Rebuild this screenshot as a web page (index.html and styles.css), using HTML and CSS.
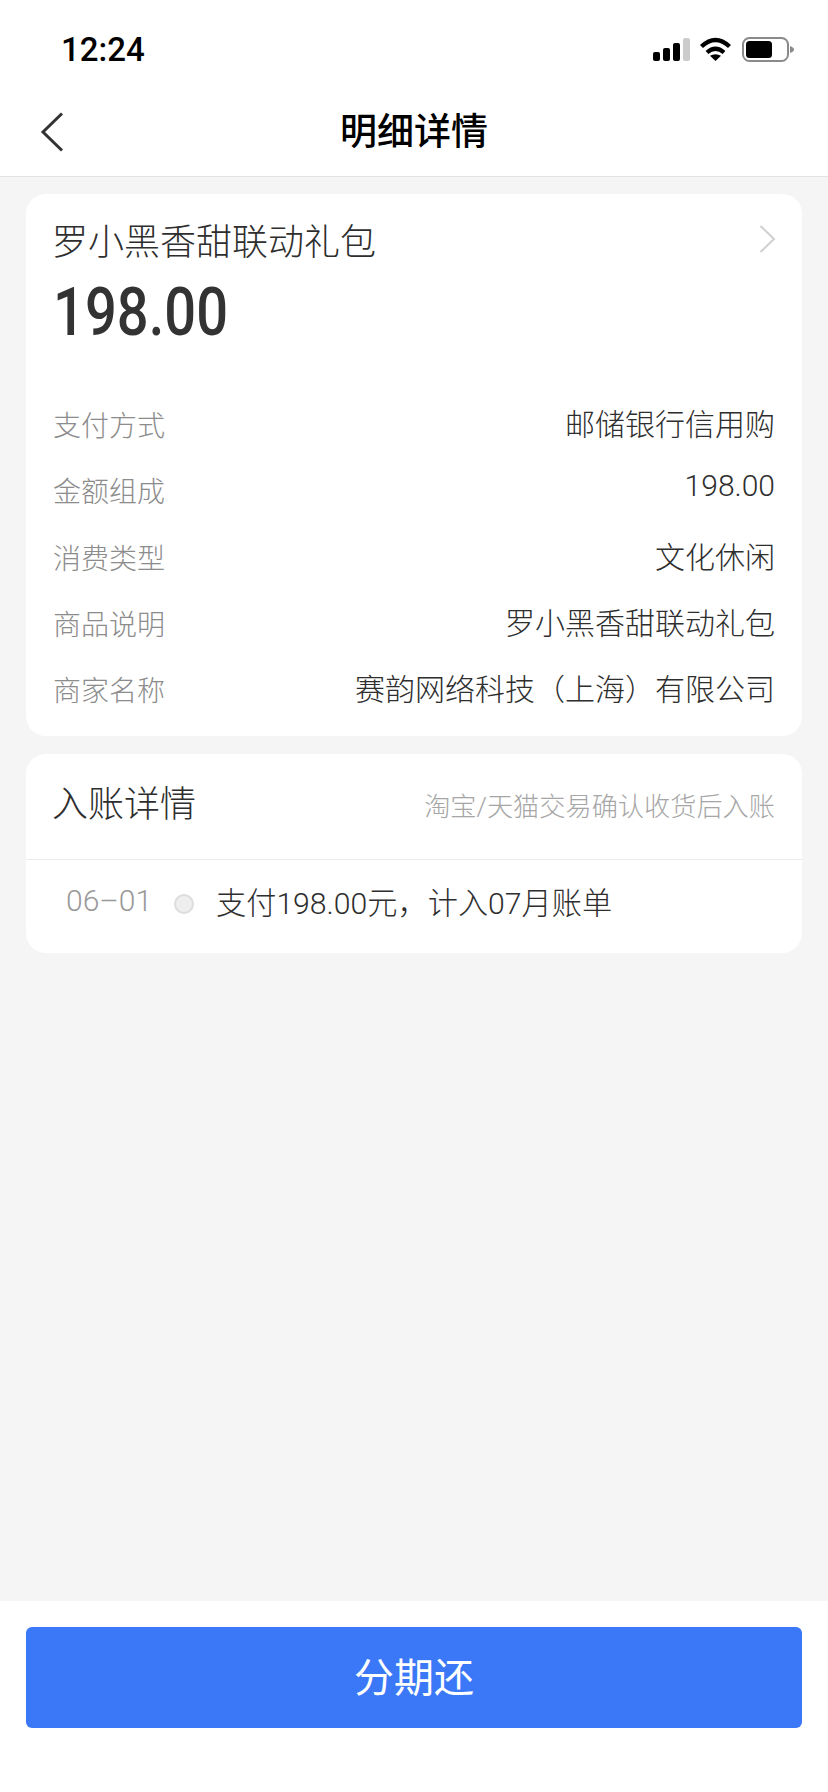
FILE: index.html
```html
<!DOCTYPE html>
<html lang="zh-CN">
<head>
<meta charset="utf-8">
<title>明细详情</title>
<link rel="stylesheet" href="styles.css">
</head>
<body>
<div class="app">
  <header class="status">
    <span class="time">12:24</span>
    <svg class="status-icons" width="141" height="25" viewBox="0 0 141 25">
      <rect x="0" y="15" width="7" height="9" rx="2" fill="#000"/>
      <rect x="10" y="11" width="7" height="13" rx="2" fill="#000"/>
      <rect x="20" y="6" width="7" height="18" rx="2" fill="#000"/>
      <rect x="30" y="1" width="7" height="23" rx="2" fill="#ccc"/>
      <path d="M48.5 9.5Q62.5 -3.5 76.5 9.5" fill="none" stroke="#000" stroke-width="4.4"/>
      <path d="M54 15.5Q62.5 8 71 15.5" fill="none" stroke="#000" stroke-width="4.2"/>
      <path d="M62.5 24L57 18.8Q62.5 15.5 68 18.8Z" fill="#000"/>
      <rect x="90" y="1" width="45" height="23" rx="6.5" fill="none" stroke="#8a8a8a" stroke-width="2"/>
      <rect x="93" y="4" width="26" height="17" rx="3.5" fill="#000"/>
      <path d="M137 9Q141 10.500 141 12.500Q141 14.500 137 16Z" fill="#8a8a8a"/>
    </svg>
  </header>
  <nav class="nav">
    <svg class="back" width="24" height="40" viewBox="0 0 24 40">
      <path d="M22 1.500L3 20L22 38.500" fill="none" stroke="#333" stroke-width="3"/>
    </svg>
    <h1 class="nav-title">明细详情</h1>
  </nav>
  <main class="main">
    <section class="card">
      <div class="head-row">
        <span class="goods">罗小黑香甜联动礼包</span>
        <svg class="more" width="17" height="28" viewBox="0 0 17 28">
          <path d="M1.500 1L15 14L1.500 27" fill="none" stroke="#d0d0d0" stroke-width="2"/>
        </svg>
      </div>
      <div class="amount">198.00</div>
      <dl class="rows">
        <div class="row"><dt>支付方式</dt><dd>邮储银行信用购</dd></div>
        <div class="row"><dt>金额组成</dt><dd class="num">198.00</dd></div>
        <div class="row"><dt>消费类型</dt><dd>文化休闲</dd></div>
        <div class="row"><dt>商品说明</dt><dd>罗小黑香甜联动礼包</dd></div>
        <div class="row"><dt>商家名称</dt><dd>赛韵网络科技（上海）有限公司</dd></div>
      </dl>
    </section>
    <section class="card">
      <div class="entry-head">
        <h2 class="entry-title">入账详情</h2>
        <span class="entry-hint">淘宝/天猫交易确认收货后入账</span>
      </div>
      <div class="entry-row">
        <span class="entry-date">06–01</span>
        <span class="entry-dot"></span>
        <span class="entry-text">支付198.00元，计入07月账单</span>
      </div>
    </section>
  </main>
  <footer class="footer">
    <button class="cta" type="button">分期还</button>
  </footer>
</div>
</body>
</html>
```
FILE: styles.css
```css
* { box-sizing: border-box; }
html, body { margin: 0; padding: 0; }
body {
  font-family: Roboto, "Noto Sans CJK SC", sans-serif;
  color: #333;
  background: #fff;
}
.app { display: flex; flex-direction: column; height: 1792px; }

.status {
  height: 88px;
  padding: 37px 34px 0 61px;
  display: flex;
  justify-content: space-between;
  align-items: flex-start;
  background: #fff;
}
.time {
  font-size: 33px;
  line-height: 26px;
  font-weight: 500;
  color: #000;
}
.status-icons { display: block; }

.nav {
  position: relative;
  height: 89px;
  border-bottom: 1px solid #e2e2e2;
  display: flex;
  align-items: center;
  justify-content: center;
  background: #fff;
}
.back { position: absolute; left: 40px; top: 24px; }
.nav-title {
  margin: 2px 0 0;
  font-size: 37px;
  line-height: 50px;
  font-weight: 500;
  color: #000;
}

.main {
  flex: 1;
  background: #f5f5f5;
  padding: 17px 26px 0;
  display: flex;
  flex-direction: column;
  gap: 18px;
}
.card { background: #fff; border-radius: 20px; }

.head-row {
  display: flex;
  justify-content: space-between;
  align-items: center;
  padding: 24px 26px 0 26px;
}
.goods { font-size: 36px; line-height: 50px; font-weight: 300; color: #2e2e2e; }
.more { margin-top: -8px; }
.amount {
  padding-left: 27px;
  height: 88px;
  font-size: 66px;
  line-height: 90px;
  font-weight: 500;
  color: #333;
  transform: scaleX(0.85);
  transform-origin: 27px 0;
}
.rows { margin: 0; padding: 35px 27px 13.75px 27px; }
.row {
  height: 66.25px;
  display: flex;
  justify-content: space-between;
  align-items: center;
  font-weight: 300;
}
.row dt { font-size: 28px; color: #8c8c8c; }
.row dd { margin: 0 0 4px; font-size: 30px; color: #2e2e2e; }
.row .num { margin: -10px 0 0; }

.entry-head {
  height: 106px;
  padding: 0 27px 4px 26px;
  display: flex;
  justify-content: space-between;
  align-items: center;
  border-bottom: 1px solid #ececec;
}
.entry-title { margin: 0; font-size: 36px; line-height: 50px; font-weight: 300; color: #2e2e2e; }
.entry-hint { font-size: 26.2px; font-weight: 300; color: #a6a6a6; }
.entry-row {
  height: 93px;
  padding: 0 0 6px 40px;
  display: flex;
  align-items: center;
}
.entry-date { width: 108px; font-size: 30px; font-weight: 300; color: #999; margin-top: -6px; }
.entry-dot {
  width: 20px;
  height: 20px;
  border-radius: 50%;
  background: #eee;
  border: 2px solid #ddd;
}
.entry-text { margin: 0 0 5px 22px; font-size: 30.2px; font-weight: 300; color: #2e2e2e; }

.footer {
  height: 191px;
  padding: 26px 26px 0;
  background: #fff;
}
.cta {
  display: block;
  width: 100%;
  height: 101px;
  padding: 0 0 6px;
  border: 0;
  border-radius: 6px;
  background: #3a78f8;
  color: #fff;
  font-family: "Noto Sans CJK SC", sans-serif;
  font-size: 40px;
  font-weight: 400;
}
```
